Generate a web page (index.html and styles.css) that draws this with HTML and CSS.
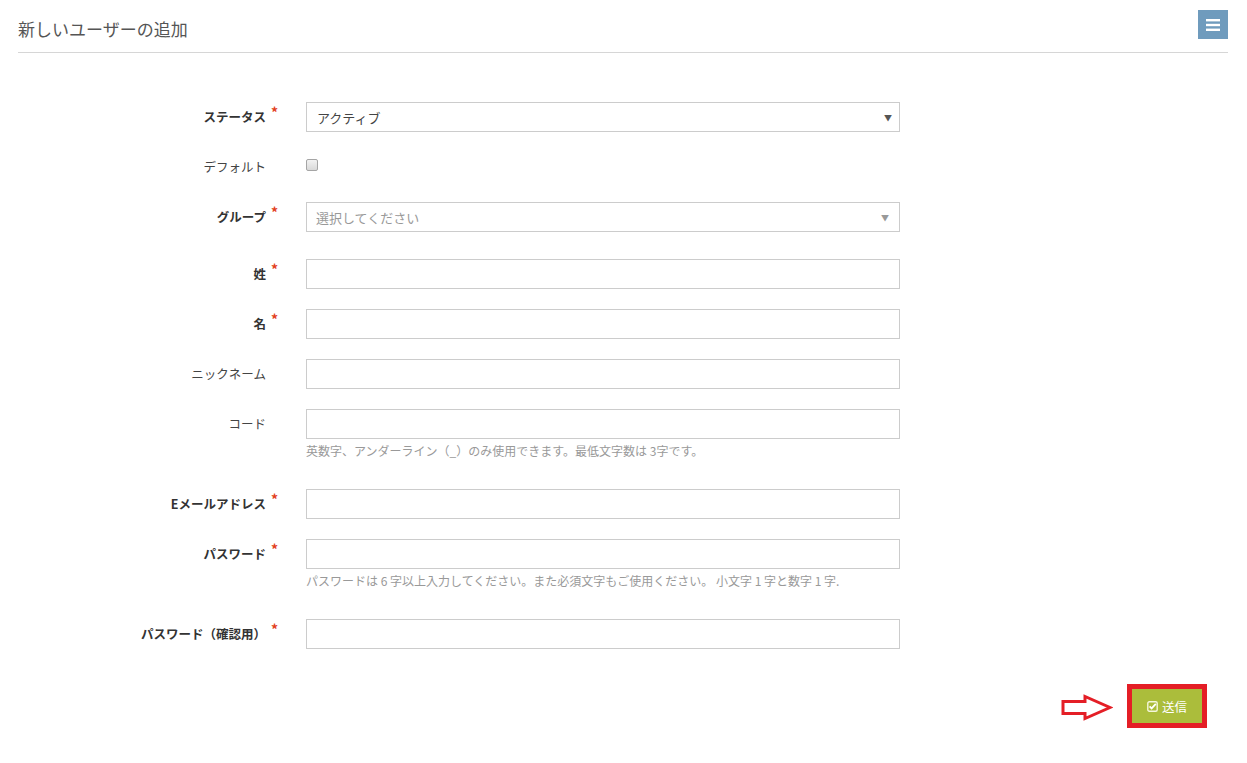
FILE: index.html
```html
<!DOCTYPE html>
<html lang="ja">
<head>
  <meta charset="UTF-8">
  <title>新しいユーザーの追加</title>
  <link rel="stylesheet" href="styles.css">
</head>
<body>
  <div class="page">
    <div class="page-header">
      <h1 class="page-title">新しいユーザーの追加</h1>
      <button class="menu-btn" type="button" aria-label="menu">
        <svg width="14" height="12" viewBox="0 0 14 12">
          <rect x="0" y="0" width="14" height="2.4" fill="#fff"/>
          <rect x="0" y="4.8" width="14" height="2.4" fill="#fff"/>
          <rect x="0" y="9.6" width="14" height="2.4" fill="#fff"/>
        </svg>
      </button>
    </div>

    <form class="user-form">
      <div class="row">
        <label class="label req">ステータス</label>
        <span class="star">*</span>
        <div class="field">
          <div class="select">アクティブ<span class="caret">▼</span></div>
        </div>
      </div>

      <div class="row">
        <label class="label">デフォルト</label>
        <span class="star"></span>
        <div class="field check-field"><input type="checkbox" class="check"></div>
      </div>

      <div class="row row-group">
        <label class="label req">グループ</label>
        <span class="star">*</span>
        <div class="field">
          <div class="select select2 placeholder">選択してください<span class="caret">▼</span></div>
        </div>
      </div>

      <div class="row">
        <label class="label req">姓</label>
        <span class="star">*</span>
        <div class="field"><input type="text" class="input"></div>
      </div>

      <div class="row">
        <label class="label req">名</label>
        <span class="star">*</span>
        <div class="field"><input type="text" class="input"></div>
      </div>

      <div class="row">
        <label class="label">ニックネーム</label>
        <span class="star"></span>
        <div class="field"><input type="text" class="input"></div>
      </div>

      <div class="row">
        <label class="label">コード</label>
        <span class="star"></span>
        <div class="field">
          <input type="text" class="input">
          <p class="help">英数字、アンダーライン（_）のみ使用できます。最低文字数は 3字です。</p>
        </div>
      </div>

      <div class="row">
        <label class="label req">Eメールアドレス</label>
        <span class="star">*</span>
        <div class="field"><input type="text" class="input"></div>
      </div>

      <div class="row">
        <label class="label req">パスワード</label>
        <span class="star">*</span>
        <div class="field">
          <input type="password" class="input">
          <p class="help">パスワードは 6 字以上入力してください。また必須文字もご使用ください。 小文字 1 字と数字 1 字.</p>
        </div>
      </div>

      <div class="row">
        <label class="label req">パスワード（確認用）</label>
        <span class="star">*</span>
        <div class="field"><input type="password" class="input"></div>
      </div>

      <div class="actions">
        <svg class="arrow" width="52" height="27" viewBox="0 0 52 27">
          <polygon points="2,7.5 24,7.5 24,2.5 49,13.5 24,24.5 24,19.5 2,19.5" fill="#fff" stroke="#e41e26" stroke-width="3" stroke-linejoin="miter"/>
        </svg>
        <div class="highlight">
          <button type="submit" class="submit-btn">
            <svg width="11" height="11" viewBox="0 0 11 11">
              <rect x="0.8" y="0.8" width="9.4" height="9.4" rx="1.5" fill="none" stroke="#f4f6dc" stroke-width="1.4"/>
              <path d="M2.6 5.4 L4.6 7.4 L8.8 2.8" fill="none" stroke="#fff" stroke-width="1.8"/>
            </svg>
            送信
          </button>
        </div>
      </div>
    </form>
  </div>
</body>
</html>
```

FILE: styles.css
```css
body {
  margin: 0;
  background: #fff;
  font-family: "Noto Sans CJK JP", "Noto Sans", sans-serif;
  color: #333;
}

.page {
  padding: 0 19px 0 18px;
}

.page-header {
  display: flex;
  justify-content: space-between;
  align-items: flex-start;
  padding-top: 10px;
  height: 42px;
  border-bottom: 1px solid #d6d6d6;
}

.page-title {
  margin: 0;
  padding-top: 4px;
  font-size: 17px;
  line-height: 30px;
  font-weight: normal;
  color: #555;
}

.menu-btn {
  width: 30px;
  height: 29px;
  padding: 0;
  border: none;
  background: #6f9bbd;
  display: flex;
  align-items: center;
  justify-content: center;
  cursor: pointer;
}

.user-form {
  padding-top: 49px;
}

.row {
  display: grid;
  grid-template-columns: 248px 40px 594px;
  align-items: start;
  margin-bottom: 20px;
}

.row-group {
  margin-bottom: 27px;
}

.label {
  text-align: right;
  font-size: 12.5px;
  line-height: 30px;
  color: #444;
  white-space: nowrap;
}

.label.req {
  font-weight: bold;
  color: #333;
}

.star {
  padding-left: 5px;
  color: #e2401c;
  font-size: 14px;
  font-weight: bold;
  line-height: 20px;
}

.field {
  min-height: 30px;
}

.input,
.select {
  box-sizing: border-box;
  width: 594px;
  height: 30px;
  margin: 0;
  border: 1px solid #ccc;
  background: #fff;
  font-family: inherit;
  font-size: 13px;
}

.select {
  position: relative;
  padding: 0 10px;
  line-height: 30px;
  color: #444;
}

.select.placeholder {
  padding-left: 9px;
  color: #999;
}

.caret {
  position: absolute;
  right: 7px;
  top: 0;
  font-size: 8px;
  color: #555;
}

.placeholder .caret {
  right: 10px;
  color: #999;
}

.check-field {
  display: flex;
  align-items: center;
}

.check {
  appearance: none;
  width: 12px;
  height: 12px;
  margin: 0;
  border: 1px solid #a5a5a5;
  border-radius: 2px;
  background: linear-gradient(#f2f2f2, #d9d9d9);
  position: relative;
  top: -2px;
}

.help {
  margin: 4px 0 11px;
  font-size: 12px;
  line-height: 15px;
  color: #999;
  white-space: nowrap;
}

.actions {
  display: flex;
  justify-content: flex-end;
  align-items: center;
  gap: 14px;
  padding-top: 15px;
  padding-right: 21px;
}

.arrow {
  display: block;
  margin-top: 2px;
}

.highlight {
  border: 5px solid #e41e26;
}

.submit-btn {
  display: flex;
  align-items: center;
  justify-content: center;
  gap: 4px;
  width: 70px;
  height: 34px;
  padding: 0;
  border: none;
  background: #abbd3b;
  color: #fff;
  font-family: inherit;
  font-size: 12.5px;
  cursor: pointer;
}
```
